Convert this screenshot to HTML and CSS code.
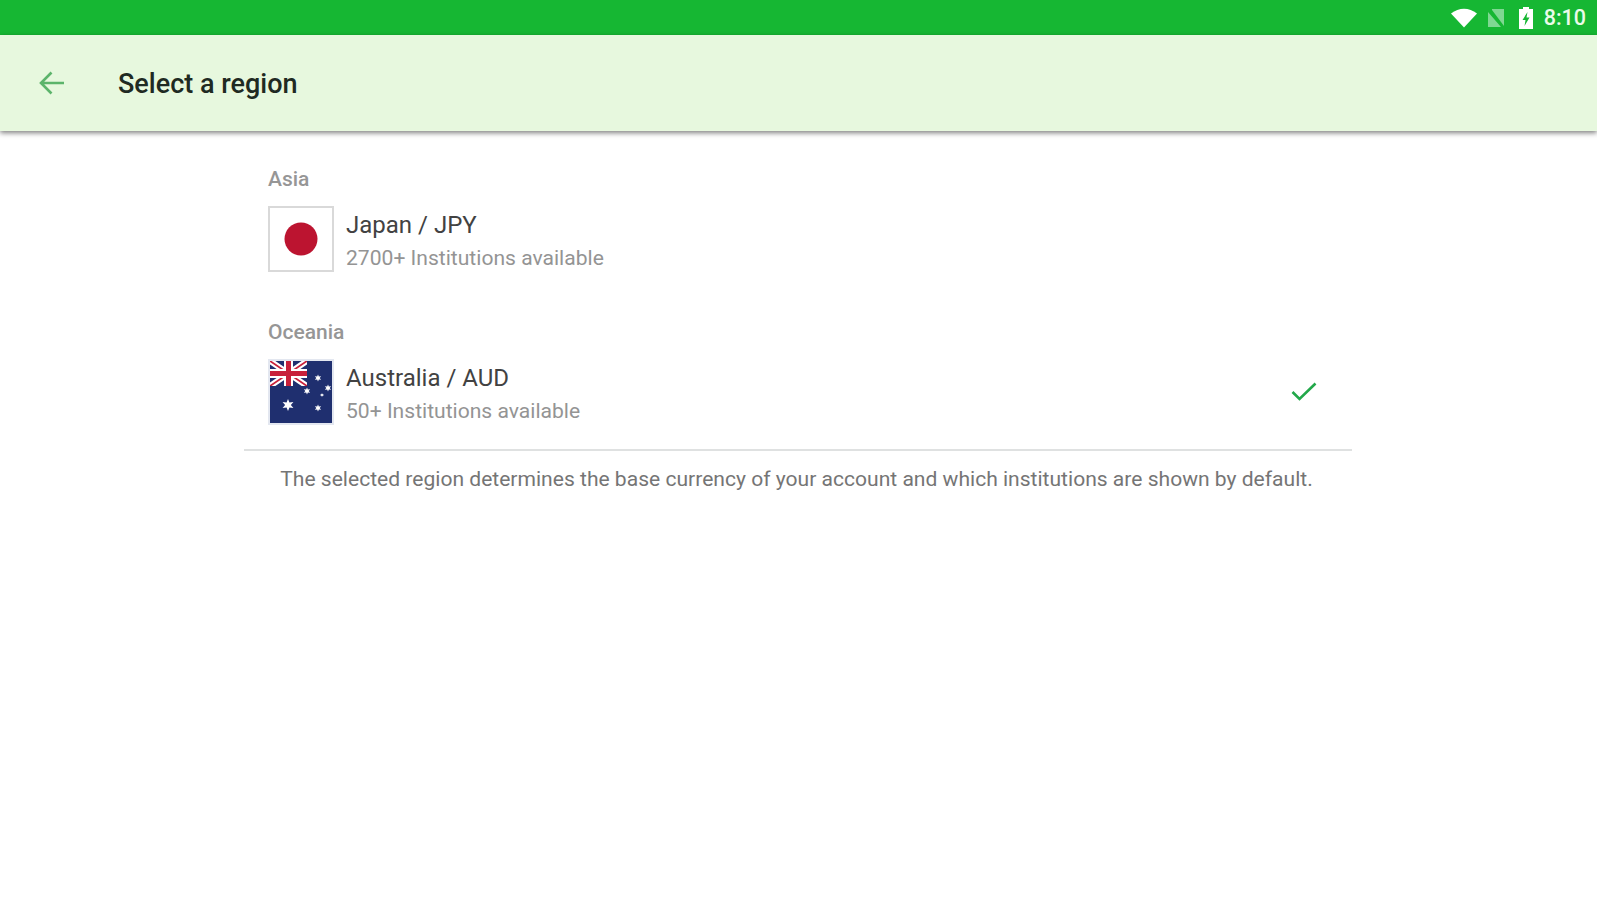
FILE: index.html
```html
<!DOCTYPE html>
<html lang="en">
<head>
  <meta charset="UTF-8">
  <title>Select a region</title>
  <meta name="viewport" content="width=device-width, initial-scale=1.0">
  <link rel="stylesheet" href="styles.css">
</head>
<body>
  <div class="status-bar">
    <svg class="icon-wifi" width="28" height="20" viewBox="0 0 28 20">
      <path d="M1 5.500 C9 -0.800 19 -0.800 27 5.500 L14 19.500 Z" fill="#fff"/>
    </svg>
    <svg class="icon-sim" width="20" height="20" viewBox="0 0 20 20">
      <path d="M6 1 H18 V18 L6 2 Z M2 4 L15 19 H2 Z" fill="#7fd892"/>
    </svg>
    <svg class="icon-battery" width="14" height="22" viewBox="0 0 14 22">
      <path d="M4 0 H10 V2 H14 V22 H0 V2 H4 Z" fill="#fff"/>
      <path d="M8.500 5 L3.500 13 H6.500 L5.500 19 L10.500 10.500 H7.500 Z" fill="#16b733"/>
    </svg>
    <span class="clock">8:10</span>
  </div>

  <header class="app-bar">
    <svg class="icon-back" width="26" height="24" viewBox="0 0 26 24">
      <path d="M25 12 H2 M12.500 1.500 L2 12 L12.500 22.500" fill="none" stroke="#5cb46b" stroke-width="2.600"/>
    </svg>
    <h1>Select a region</h1>
  </header>

  <main class="content">
    <section class="group">
      <h2>Asia</h2>
      <div class="region">
        <svg class="flag" width="66" height="66" viewBox="0 0 66 66">
          <rect x="1" y="1" width="64" height="64" fill="#fff" stroke="#d9d9d9" stroke-width="2"/>
          <circle cx="33" cy="33" r="16.500" fill="#bc1430"/>
        </svg>
        <div class="region-text">
          <div class="region-name">Japan / JPY</div>
          <div class="region-sub">2700+ Institutions available</div>
        </div>
      </div>
    </section>

    <section class="group">
      <h2>Oceania</h2>
      <div class="region">
        <svg class="flag" width="66" height="66" viewBox="0 0 66 66">
          <defs>
            <path id="star" d="M0 -5 L1.200 -2 L4.500 -2.500 L2.400 0 L4.500 2.500 L1.200 2 L0 5 L-1.200 2 L-4.500 2.500 L-2.400 0 L-4.500 -2.500 L-1.200 -2 Z"/>
            <clipPath id="canton"><rect x="2" y="2" width="37" height="25"/></clipPath>
          </defs>
          <rect x="0" y="0" width="66" height="66" fill="#e3e7f0"/>
          <rect x="2" y="2" width="62" height="62" fill="#1f2f6f"/>
          <g clip-path="url(#canton)">
            <path d="M2 2 L39 27 M39 2 L2 27" stroke="#fff" stroke-width="6"/>
            <path d="M2 2 L39 27 M39 2 L2 27" stroke="#c8203a" stroke-width="1.800"/>
            <rect x="16" y="2" width="9" height="25" fill="#fff"/>
            <rect x="2" y="10" width="37" height="9" fill="#fff"/>
            <rect x="18" y="2" width="5" height="25" fill="#c8203a"/>
            <rect x="2" y="12" width="37" height="5" fill="#c8203a"/>
          </g>
          <g fill="#fff">
            <use href="#star" transform="translate(20 46) scale(1.200)"/>
            <use href="#star" transform="translate(50 19) scale(0.700)"/>
            <use href="#star" transform="translate(39 32) scale(0.700)"/>
            <use href="#star" transform="translate(60 29) scale(0.700)"/>
            <use href="#star" transform="translate(50 49) scale(0.700)"/>
            <use href="#star" transform="translate(54 36) scale(0.400)"/>
          </g>
        </svg>
        <div class="region-text">
          <div class="region-name">Australia / AUD</div>
          <div class="region-sub">50+ Institutions available</div>
        </div>
        <svg class="icon-check" width="26" height="20" viewBox="0 0 26 20">
          <path d="M1.500 10 L8.500 17 L24.500 1.500" fill="none" stroke="#22a84a" stroke-width="2.600"/>
        </svg>
      </div>
    </section>

    <p class="note">The selected region determines the base currency of your account and which institutions are shown by default.</p>
  </main>
</body>
</html>
```

FILE: styles.css
```css
html, body {
  margin: 0;
  height: 100%;
}

body {
  font-family: Roboto, "Liberation Sans", sans-serif;
  background: #fff;
  overflow: hidden;
}

.status-bar {
  height: 35px;
  background: #16b733;
  display: flex;
  align-items: center;
  justify-content: flex-end;
  padding-right: 11px;
  box-sizing: border-box;
}

.icon-wifi { margin-right: 8px; }
.icon-sim { margin-right: 13px; }
.icon-battery { margin-right: 11px; }

.clock {
  color: #eafbe9;
  font-size: 21.500px;
  font-weight: 500;
}

.app-bar {
  height: 96px;
  background: #e7f8de;
  display: flex;
  align-items: center;
  padding-left: 39px;
  box-shadow: 0 2px 5px rgba(0, 0, 0, 0.5);
  position: relative;
}

.app-bar h1 {
  margin: 2px 0 0 53px;
  font-size: 27px;
  font-weight: 500;
  color: #1f2a22;
}

.content {
  width: 1108px;
  margin-left: 244px;
}

.group {
  padding: 0 24px;
}

.group h2 {
  margin: 0;
  font-size: 21px;
  line-height: 26px;
  font-weight: 500;
  color: #969696;
}

.group:nth-child(1) { padding-top: 35px; }
.group:nth-child(2) { padding-top: 47px; }
.group:nth-child(2) .region { padding-bottom: 24px; }

.region {
  display: flex;
  align-items: center;
  margin-top: 14px;
}

.flag {
  flex: none;
}

.region-text {
  margin-left: 12px;
  padding-top: 4px;
  flex: 1;
}

.region-name {
  font-size: 24px;
  line-height: 30px;
  color: #424242;
}

.region-sub {
  margin-top: 3px;
  font-size: 21.080px;
  line-height: 29px;
  color: #949494;
}

.icon-check {
  margin-right: 11px;
}

.note {
  margin: 0;
  border-top: 2px solid #dfe1e1;
  padding: 14px 3px 0 0;
  text-align: center;
  font-size: 21.070px;
  line-height: 28px;
  color: #757575;
}
```
